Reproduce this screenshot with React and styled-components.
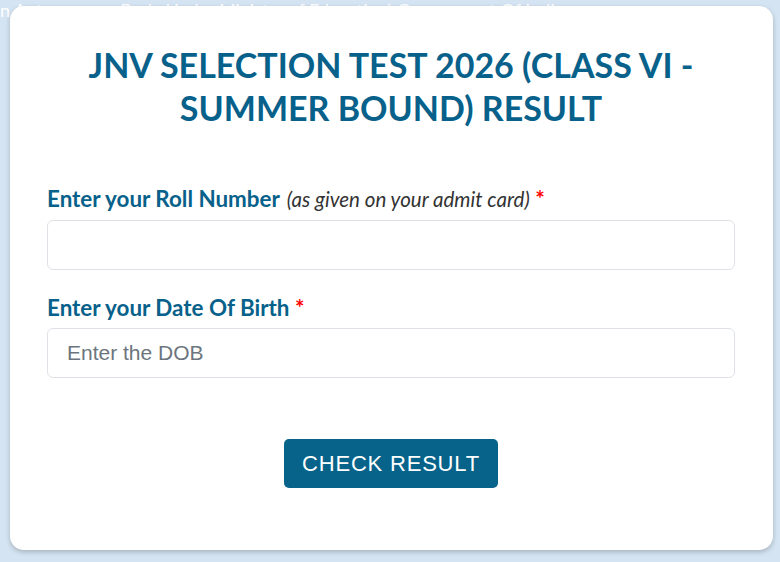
import styled, { createGlobalStyle } from "styled-components";

const GlobalStyle = createGlobalStyle`
  html, body {
    margin: 0;
    padding: 0;
    background: #d4e4f2;
    font-family: Lato, "Open Sans", sans-serif;
    overflow: hidden;
  }
  * {
    box-sizing: border-box;
  }
`;

const Page = styled.div`
  width: 780px;
  height: 562px;
  overflow: hidden;
`;

const TopLine = styled.div`
  margin-left: -17px;
  height: 20px;
  line-height: 20px;
  font-size: 18px;
  color: #ffffff;
  white-space: nowrap;
`;

const Card = styled.div`
  position: relative;
  margin: -14px 7px 0 10px;
  height: 544px;
  background: #ffffff;
  border-radius: 14px;
  box-shadow: 0 2px 5px rgba(0, 0, 0, 0.22);
  padding: 37px 38px 0 37px;
  display: flex;
  flex-direction: column;
`;

const Title = styled.h1`
  margin: 0 0 54px;
  text-align: center;
  font-size: 34px;
  line-height: 43px;
  font-weight: 700;
  color: #07618a;
`;

const Field = styled.div`
  display: flex;
  flex-direction: column;
  gap: 4.5px;
  margin-bottom: ${props => props.last ? "61px" : "22px"};
`;

const Label = styled.label`
  font-size: 22.4px;
  line-height: 31px;
  font-weight: 700;
  color: #07618a;
`;

const Hint = styled.span`
  margin-left: 2px;
  font-size: 20.5px;
  font-style: italic;
  font-weight: 400;
  color: #333333;
`;

const Star = styled.span`
  color: #ff0000;
  font-weight: 700;
`;

const Input = styled.input`
  width: 100%;
  height: 50.5px;
  padding: 0 19px;
  border: 1px solid #dee2e6;
  border-radius: 6px;
  font-family: "Liberation Sans", Arial, sans-serif;
  font-size: 21px;
  color: #212529;
  background: #ffffff;
  outline: none;

  &::placeholder {
    color: #6c757d;
  }
`;

const ButtonRow = styled.div`
  display: flex;
  justify-content: center;
`;

const Button = styled.button`
  height: 49px;
  padding: 0 18px;
  border: none;
  border-radius: 5px;
  background: #07638a;
  color: #ffffff;
  font-family: "Liberation Sans", Arial, sans-serif;
  font-size: 22px;
  letter-spacing: 0.8px;
  cursor: pointer;
`;

export default function App() {
  return (
    <Page>
      <GlobalStyle />
      <TopLine>(An Autonomous Body Under Ministry of Education) Government Of India</TopLine>
      <Card>
        <Title>
          JNV SELECTION TEST 2026 (CLASS VI -<br />SUMMER BOUND) RESULT
        </Title>
        <Field>
          <Label>
            Enter your Roll Number <Hint>(as given on your admit card)</Hint> <Star>*</Star>
          </Label>
          <Input type="text" />
        </Field>
        <Field last>
          <Label>
            Enter your Date Of Birth <Star>*</Star>
          </Label>
          <Input type="text" placeholder="Enter the DOB" />
        </Field>
        <ButtonRow>
          <Button>CHECK RESULT</Button>
        </ButtonRow>
      </Card>
    </Page>
  );
}
